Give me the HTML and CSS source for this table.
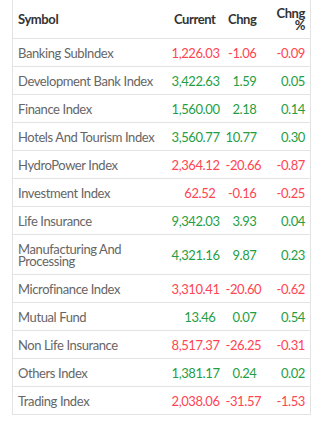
FILE: index.html
```html
<!DOCTYPE html>
<html lang="en">
<head>
<meta charset="utf-8">
<title>Sub Indices</title>
<link rel="stylesheet" href="styles.css">
</head>
<body>
<table class="idx">
  <colgroup>
    <col class="c-sym"><col class="c-cur"><col class="c-chg"><col class="c-pct">
  </colgroup>
  <thead>
    <tr><th class="l">Symbol</th><th>Current</th><th>Chng</th><th>Chng %</th></tr>
  </thead>
  <tbody>
    <tr class="dn"><td class="l">Banking SubIndex</td><td>1,226.03</td><td>-1.06</td><td>-0.09</td></tr>
    <tr class="up"><td class="l">Development Bank Index</td><td>3,422.63</td><td>1.59</td><td>0.05</td></tr>
    <tr class="up"><td class="l">Finance Index</td><td>1,560.00</td><td>2.18</td><td>0.14</td></tr>
    <tr class="up"><td class="l">Hotels And Tourism Index</td><td>3,560.77</td><td>10.77</td><td>0.30</td></tr>
    <tr class="dn"><td class="l">HydroPower Index</td><td>2,364.12</td><td>-20.66</td><td>-0.87</td></tr>
    <tr class="dn"><td class="l">Investment Index</td><td>62.52</td><td>-0.16</td><td>-0.25</td></tr>
    <tr class="up"><td class="l">Life Insurance</td><td>9,342.03</td><td>3.93</td><td>0.04</td></tr>
    <tr class="up"><td class="l">Manufacturing And Processing</td><td>4,321.16</td><td>9.87</td><td>0.23</td></tr>
    <tr class="dn"><td class="l">Microfinance Index</td><td>3,310.41</td><td>-20.60</td><td>-0.62</td></tr>
    <tr class="up"><td class="l">Mutual Fund</td><td>13.46</td><td>0.07</td><td>0.54</td></tr>
    <tr class="dn"><td class="l">Non Life Insurance</td><td>8,517.37</td><td>-26.25</td><td>-0.31</td></tr>
    <tr class="up"><td class="l">Others Index</td><td>1,381.17</td><td>0.24</td><td>0.02</td></tr>
    <tr class="dn"><td class="l">Trading Index</td><td>2,038.06</td><td>-31.57</td><td>-1.53</td></tr>
  </tbody>
</table>
</body>
</html>
```
FILE: styles.css
```css
html, body {
  margin: 0;
  padding: 0;
  background: #fff;
}
body {
  padding: 0 13px 0 12px;
  font-family: Lato, "Noto Sans", sans-serif;
  font-size: 13px;
  letter-spacing: -0.4px;
}
.idx {
  width: 298px;
  border-collapse: collapse;
  table-layout: fixed;
  border-left: 1px solid #e3e3e3;
  border-right: 1px solid #e3e3e3;
  border-bottom: 1px solid #e3e3e3;
}
.c-sym { width: 154px; }
.c-cur { width: 54px; }
.c-chg { width: 41px; }
.c-pct { width: 49px; }
.idx th, .idx td {
  padding: 8px 5px 7px 5px;
  line-height: 12px;
  text-align: right;
  vertical-align: middle;
  white-space: normal;
}
.idx th {
  padding-top: 7px;
  font-weight: 700;
  color: #333;
  border-bottom: 1px solid #e3e3e3;
}
.idx td {
  border-top: 1px solid #e3e3e3;
}
.idx tbody tr:first-child td { border-top: none; }
.idx .l { text-align: left; }
.up td { color: #1f9e45; }
.dn td { color: #ff4452; }
.up td.l, .dn td.l { color: #666; }
```
